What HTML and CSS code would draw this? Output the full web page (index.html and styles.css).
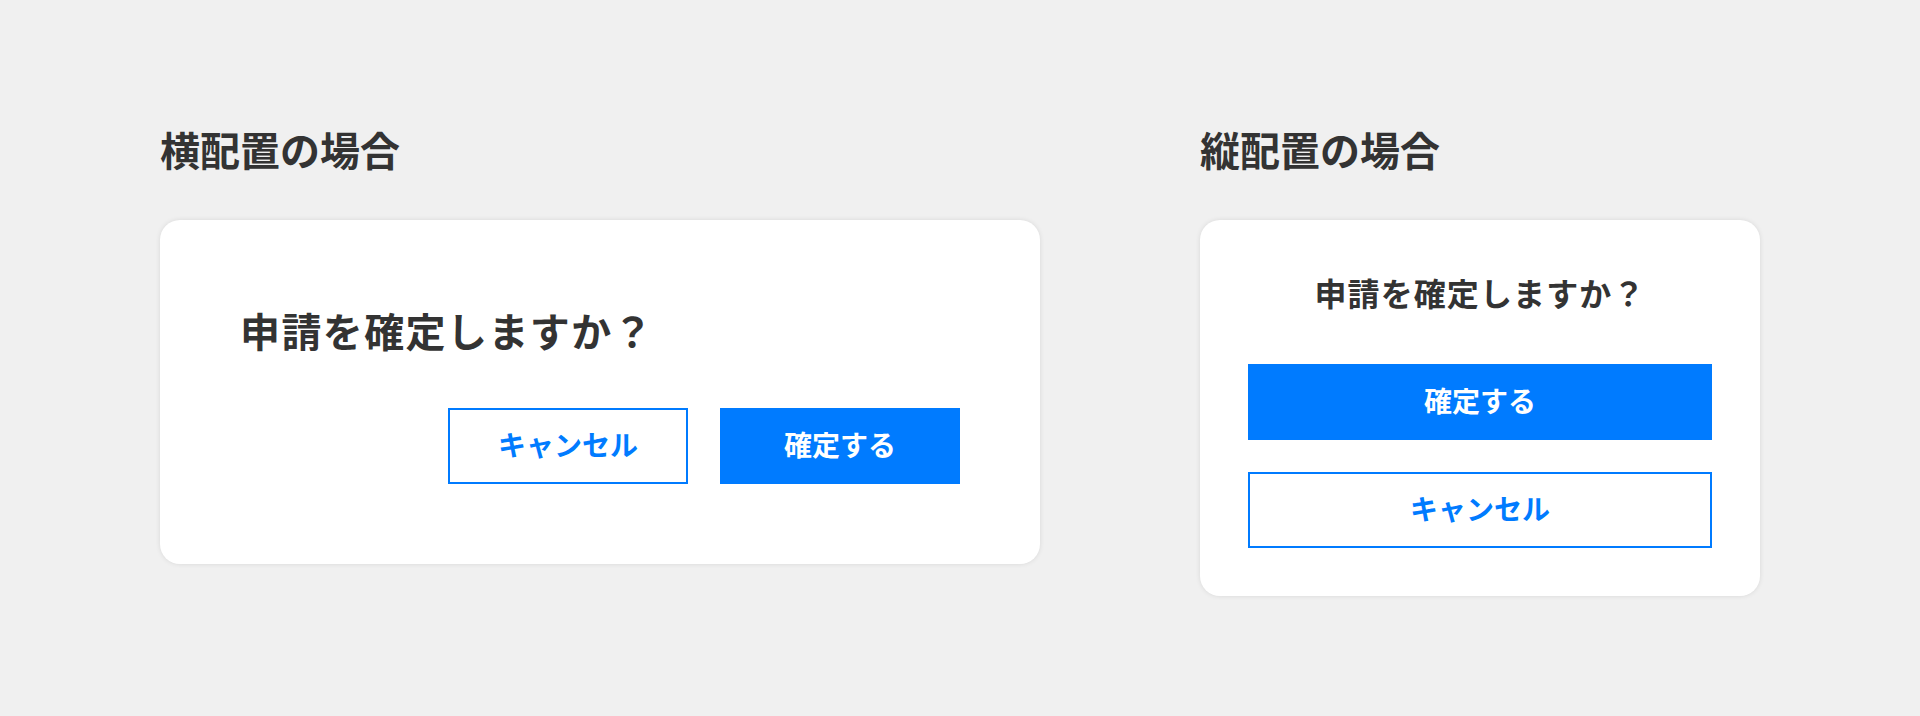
FILE: index.html
```html
<!DOCTYPE html>
<html lang="ja">
<head>
<meta charset="utf-8">
<title>ダイアログ</title>
<link rel="stylesheet" href="styles.css">
</head>
<body>
<main class="page">
  <section class="col col-h">
    <h2 class="heading">横配置の場合</h2>
    <div class="card card-h">
      <p class="question question-h">申請を確定しますか？</p>
      <div class="actions-h">
        <button class="btn btn-outline btn-h">キャンセル</button>
        <button class="btn btn-fill btn-h">確定する</button>
      </div>
    </div>
  </section>
  <section class="col col-v">
    <h2 class="heading">縦配置の場合</h2>
    <div class="card card-v">
      <p class="question question-v">申請を確定しますか？</p>
      <div class="actions-v">
        <button class="btn btn-fill">確定する</button>
        <button class="btn btn-outline">キャンセル</button>
      </div>
    </div>
  </section>
</main>
</body>
</html>
```

FILE: styles.css
```css
* { box-sizing: border-box; }
html, body { margin: 0; padding: 0; }
body {
  background: #f0f0f0;
  font-family: "Noto Sans CJK JP", "Noto Sans", sans-serif;
  color: #333333;
  width: 1920px;
  height: 716px;
  overflow: hidden;
}
.page {
  display: flex;
  align-items: flex-start;
  gap: 160px;
  padding: 119px 0 0 160px;
}
.col { display: flex; flex-direction: column; }
.col-h { width: 880px; }
.col-v { width: 560px; }
.heading {
  margin: 0 0 41px;
  font-size: 40px;
  line-height: 60px;
  font-weight: 700;
  color: #333333;
}
.card {
  background: #ffffff;
  border-radius: 20px;
  box-shadow: 0 0 5px rgba(0, 0, 0, 0.1);
}
.card-h { padding: 80px; }
.card-v { padding: 48px; }
.question {
  margin: 0;
  font-weight: 700;
  color: #333333;
  letter-spacing: 0.035em;
}
.question-h {
  font-size: 40px;
  line-height: 60px;
  margin-bottom: 48px;
}
.question-v {
  font-size: 32px;
  line-height: 48px;
  text-align: center;
  margin-bottom: 48px;
}
.actions-h {
  display: flex;
  justify-content: flex-end;
  gap: 32px;
}
.actions-v {
  display: flex;
  flex-direction: column;
  gap: 32px;
}
.btn {
  height: 76px;
  font-family: inherit;
  font-size: 28px;
  font-weight: 700;
  border-radius: 0;
  padding: 0 0 4px;
  margin: 0;
  cursor: pointer;
}
.btn-h { width: 240px; }
.btn-outline {
  background: #ffffff;
  border: 2px solid #007bff;
  color: #007bff;
}
.btn-fill {
  background: #007bff;
  border: 2px solid #007bff;
  color: #ffffff;
}
```
